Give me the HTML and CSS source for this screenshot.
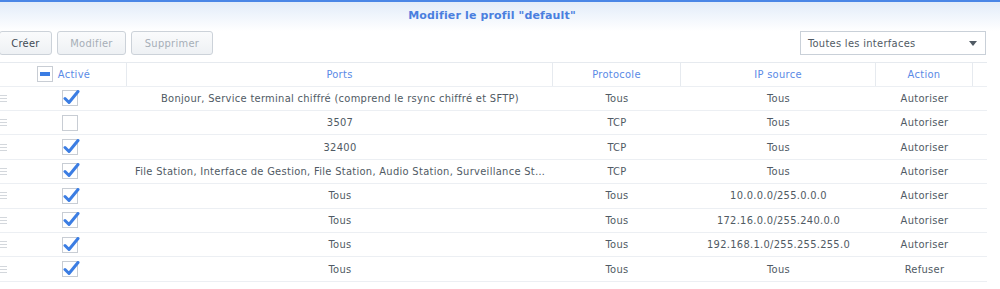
FILE: index.html
```html
<!DOCTYPE html>
<html lang="fr">
<head>
    <meta charset="UTF-8">
    <title>Modifier le profil "default"</title>
    <link rel="stylesheet" href="styles.css">
</head>
<body>
    <div class="titlebar">Modifier le profil "default"</div>

    <div class="toolbar">
        <button class="btn btn-create">Créer</button>
        <button class="btn btn-edit" disabled>Modifier</button>
        <button class="btn btn-delete" disabled>Supprimer</button>
        <div class="select">
            <span>Toutes les interfaces</span>
            <span class="arrow"></span>
        </div>
    </div>

    <div class="grid">
        <div class="row head">
            <div class="cell c-active"><span class="cb partial"></span>Activé</div>
            <div class="cell c-ports">Ports</div>
            <div class="cell c-proto">Protocole</div>
            <div class="cell c-ip">IP source</div>
            <div class="cell c-action">Action</div>
            <div class="cell c-rest"></div>
        </div>
    </div>

    <script>
        // rules of the profile
        const rules = [
            [true, 'Bonjour, Service terminal chiffré (comprend le rsync chiffré et SFTP)', 'Tous', 'Tous', 'Autoriser'],
            [false, '3507', 'TCP', 'Tous', 'Autoriser'],
            [true, '32400', 'TCP', 'Tous', 'Autoriser'],
            [true, 'File Station, Interface de Gestion, File Station, Audio Station, Surveillance Station, Video Station', 'TCP', 'Tous', 'Autoriser'],
            [true, 'Tous', 'Tous', '10.0.0.0/255.0.0.0', 'Autoriser'],
            [true, 'Tous', 'Tous', '172.16.0.0/255.240.0.0', 'Autoriser'],
            [true, 'Tous', 'Tous', '192.168.1.0/255.255.255.0', 'Autoriser'],
            [true, 'Tous', 'Tous', 'Tous', 'Refuser']
        ];

        const check = '<svg class="tick" viewBox="0 0 18 18" width="18" height="18"><path d="M3 9.5 L7 13.5 L16 2.5" fill="none" stroke="#3b7de3" stroke-width="3" stroke-linecap="round" stroke-linejoin="round"/></svg>';

        const grid = document.querySelector('.grid');
        rules.forEach(function(r) {
            const row = document.createElement('div');
            row.className = 'row';
            row.innerHTML =
                '<div class="cell c-handle"><span class="handle"></span></div>' +
                '<div class="cell c-check"><span class="cb">' + (r[0] ? check : '') + '</span></div>' +
                '<div class="cell c-ports">' + r[1] + '</div>' +
                '<div class="cell c-proto">' + r[2] + '</div>' +
                '<div class="cell c-ip">' + r[3] + '</div>' +
                '<div class="cell c-action">' + r[4] + '</div>' +
                '<div class="cell c-rest"></div>';
            grid.appendChild(row);
        });
    </script>
</body>
</html>
```

FILE: styles.css
```css
body {
    margin: 0;
    background: white;
    font-family: "DejaVu Sans Condensed", "DejaVu Sans", sans-serif;
    font-size: 11px;
    letter-spacing: 0.3px;
    color: #505a64;
}
.titlebar {
    height: 29px;
    padding-right: 16px;
    border-top: 2px solid #4a86e6;
    background: linear-gradient(#e2ecf9, #ffffff);
    color: #4a7fdf;
    font-family: "DejaVu Sans", sans-serif;
    font-weight: bold;
    letter-spacing: 0.15px;
    text-align: center;
    line-height: 28px;
}
.toolbar {
    display: flex;
    align-items: center;
    height: 24px;
    padding-right: 14px;
    margin-bottom: 7px;
}
.btn {
    height: 24px;
    margin-right: 5px;
    padding: 0;
    border: 1px solid #ccd2d9;
    border-radius: 3px;
    background: linear-gradient(#fafbfc, #eef1f4);
    font-family: inherit;
    font-size: 11px;
    letter-spacing: 0.3px;
    color: #404a55;
}
.btn-create {
    margin-left: -1px;
    width: 53px;
}
.btn-edit {
    width: 69px;
}
.btn-delete {
    width: 82px;
}
.btn[disabled] {
    color: #a6aeb7;
}
.select {
    margin-left: auto;
    width: 186px;
    height: 24px;
    box-sizing: border-box;
    border: 1px solid #c9d0d8;
    display: flex;
    align-items: center;
    justify-content: space-between;
    padding: 0 8px 0 7px;
    color: #505a64;
}
.arrow {
    width: 0;
    height: 0;
    border-left: 4px solid transparent;
    border-right: 4px solid transparent;
    border-top: 5px solid #505a64;
}
.grid {
    width: 987px;
}
.row {
    display: grid;
    grid-template-columns: 12px 115px 426px 128px 195px 97px 14px;
    height: 24.4px;
    box-sizing: border-box;
    border-bottom: 1px solid #eceff3;
    align-items: center;
}
.row.head {
    grid-template-columns: 127px 426px 128px 195px 97px 14px;
    border-top: 1px solid #e6eaef;
    height: 24.6px;
    color: #5a8ae6;
    align-items: stretch;
}
.cell {
    white-space: nowrap;
    overflow: hidden;
    text-overflow: ellipsis;
    text-align: center;
    padding: 0 8px;
}
.head .cell {
    display: flex;
    align-items: center;
    justify-content: center;
    border-right: 1px solid #e6eaef;
}
.head .c-rest {
    border-right: none;
}
.c-handle, .c-check, .c-rest {
    padding: 0;
}
.c-handle {
    display: flex;
    align-items: center;
}
.handle {
    width: 7px;
    height: 7px;
    background: repeating-linear-gradient(#d3d7dc 0, #d3d7dc 1px, transparent 1px, transparent 3px);
}
.c-check {
    display: flex;
    justify-content: center;
}
.cb {
    position: relative;
    display: inline-block;
    width: 16px;
    height: 16px;
    box-sizing: border-box;
    border: 1px solid #c8cdd4;
    background: white;
}
.head .cb {
    margin-right: 5px;
    margin-left: 1px;
}
.cb.partial::after {
    content: "";
    position: absolute;
    left: 2px;
    right: 2px;
    top: 5px;
    height: 4px;
    background: #3b7de3;
}
.tick {
    position: absolute;
    left: -1px;
    top: -2px;
}
```
